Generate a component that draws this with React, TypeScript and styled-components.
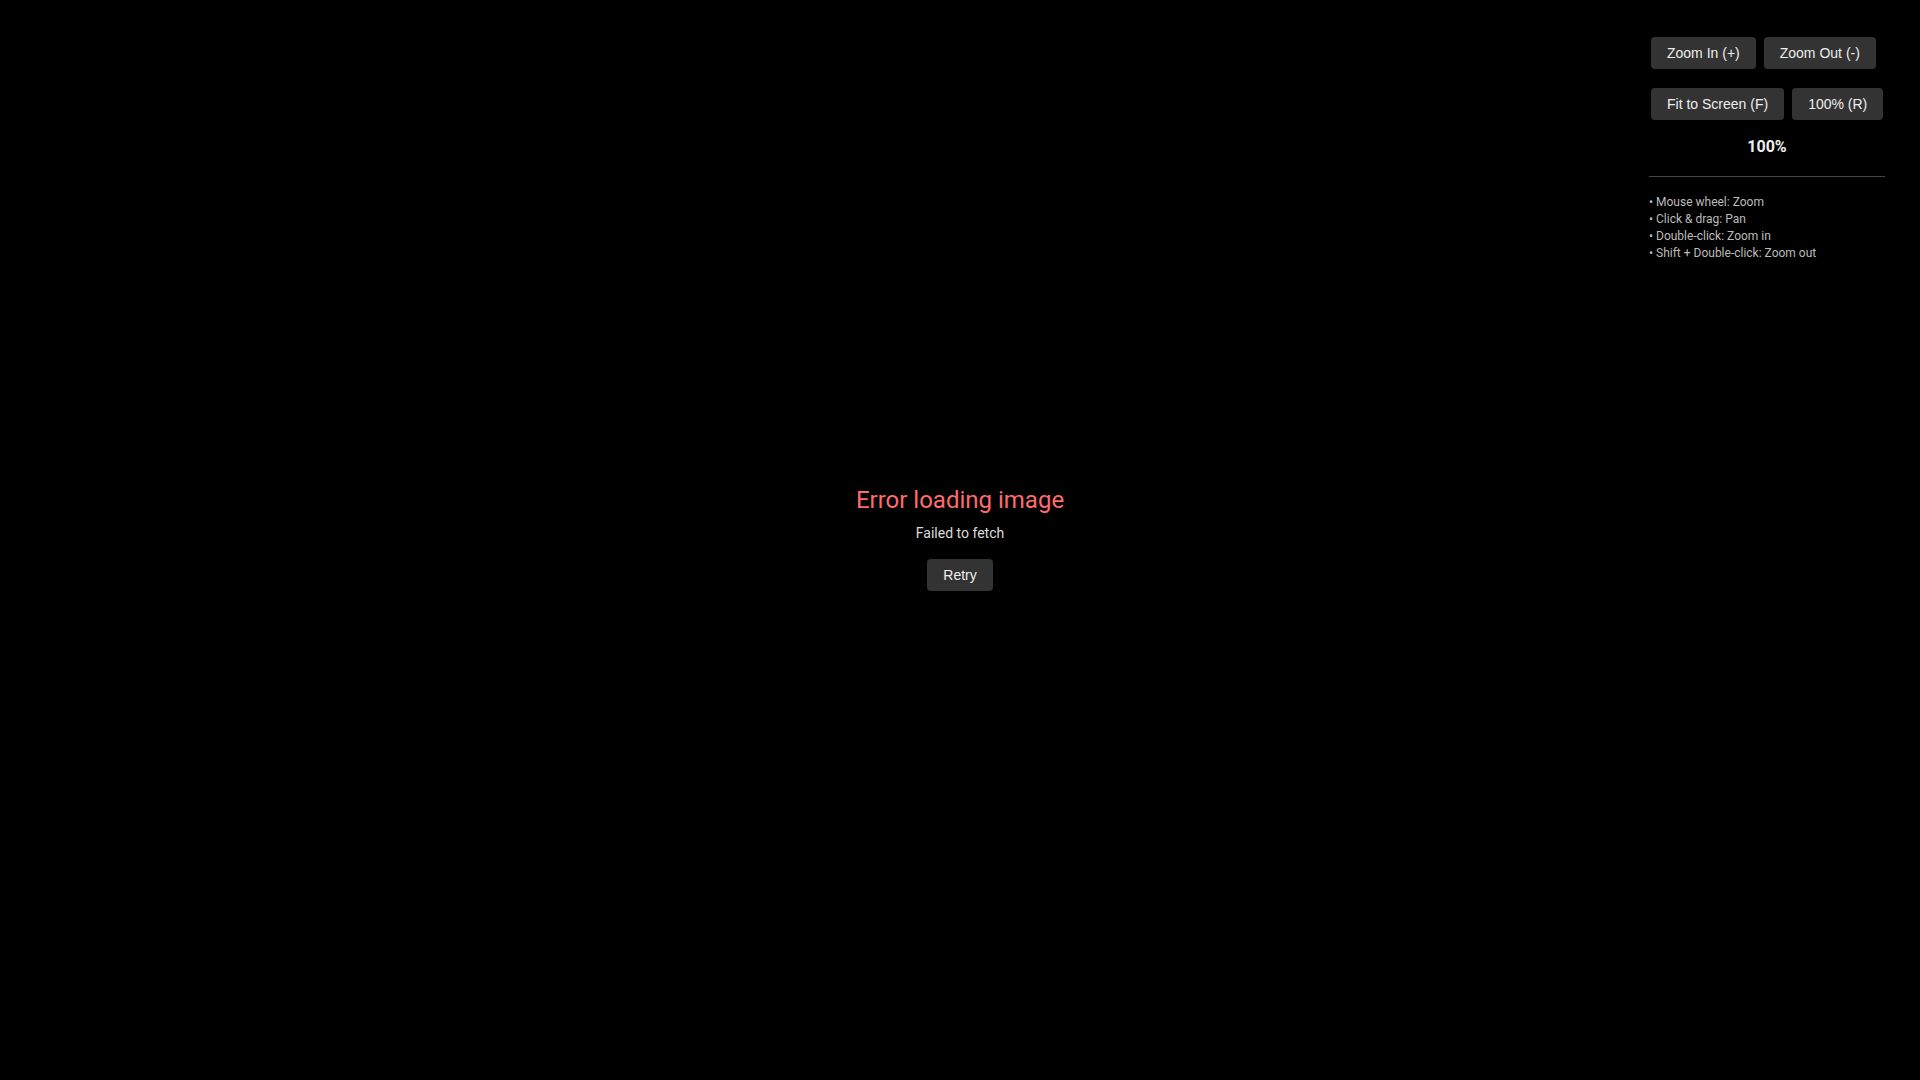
import React from 'react';
import styled, { createGlobalStyle } from 'styled-components';

const GlobalStyle = createGlobalStyle`
    html, body, #root {
        margin: 0;
        height: 100%;
        background: #000;
    }
    body {
        font-family: Roboto, "Liberation Sans", Arial, sans-serif;
        color: #fff;
    }
`;

const S = {
    Viewer: styled.div`
        position: relative;
        width: 100vw;
        height: 100vh;
        background: #000;
        overflow: hidden;
        display: flex;
        align-items: center;
        justify-content: center;
    `,
    ErrorBox: styled.div`
        display: flex;
        flex-direction: column;
        align-items: center;
        text-align: center;
    `,
    ErrorTitle: styled.h3`
        margin: 0 0 11px;
        font-size: 24px;
        font-weight: 400;
        line-height: 23px;
        color: #ff6b6b;
    `,
    ErrorMessage: styled.p`
        margin: 0 0 16px;
        font-size: 14px;
        line-height: 20px;
        color: #ddd;
    `,
    Button: styled.button`
        flex-shrink: 0;
        padding: 0 16px;
        height: 32px;
        border: none;
        border-radius: 4px;
        background: #333;
        color: #eee;
        font-family: "Liberation Sans", Arial, sans-serif;
        font-size: 14px;
        white-space: nowrap;
        cursor: pointer;

        &:hover {
            background: #444;
        }
    `,
    Controls: styled.div`
        position: absolute;
        top: 20px;
        right: 20px;
        width: 236px;
        padding: 15px;
        background: rgba(0, 0, 0, 0.8);
        border-radius: 8px;
    `,
    ButtonRow: styled.div`
        display: flex;
        gap: 8px;
        padding: 2px;

        & + & {
            margin-top: 15px;
        }
    `,
    ZoomLevel: styled.div`
        margin-top: 15px;
        text-align: center;
        font-size: 16px;
        font-weight: 700;
        line-height: 20px;
        color: #eee;
    `,
    Divider: styled.hr`
        margin: 19px 0 17px;
        border: none;
        border-top: 1px solid #444;
    `,
    Help: styled.div`
        font-size: 12px;
        line-height: 17px;
        color: #bbb;
    `
};

const help = [
    'Mouse wheel: Zoom',
    'Click & drag: Pan',
    'Double-click: Zoom in',
    'Shift + Double-click: Zoom out'
];

const App = () => {
    return (
        <>
            <GlobalStyle />
            <S.Viewer>
                <S.ErrorBox>
                    <S.ErrorTitle>Error loading image</S.ErrorTitle>
                    <S.ErrorMessage>Failed to fetch</S.ErrorMessage>
                    <S.Button>Retry</S.Button>
                </S.ErrorBox>
                <S.Controls>
                    <S.ButtonRow>
                        <S.Button>Zoom In (+)</S.Button>
                        <S.Button>Zoom Out (-)</S.Button>
                    </S.ButtonRow>
                    <S.ButtonRow>
                        <S.Button>Fit to Screen (F)</S.Button>
                        <S.Button>100% (R)</S.Button>
                    </S.ButtonRow>
                    <S.ZoomLevel>100%</S.ZoomLevel>
                    <S.Divider />
                    <S.Help>
                        {help.map((line) => (
                            <div key={line}>• {line}</div>
                        ))}
                    </S.Help>
                </S.Controls>
            </S.Viewer>
        </>
    );
};

export default App;
